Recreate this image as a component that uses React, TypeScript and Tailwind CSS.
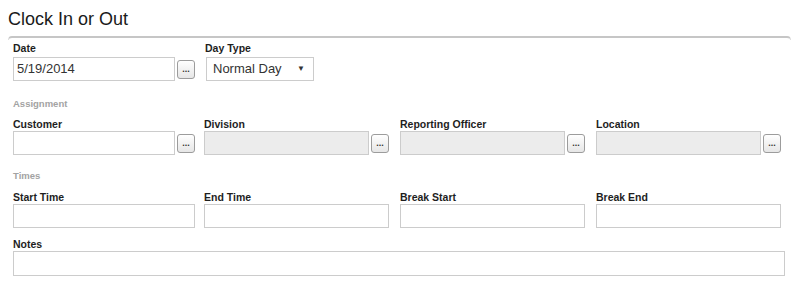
const font = { fontFamily: '"Liberation Sans", Arial, sans-serif' }

function Label({ text, className = "" }: { text: string; className?: string }) {
    return <div className={`text-[10.5px] font-bold leading-[13px] text-[#1e1e1e] ${className}`}>{text}</div>
}

function Section({ text, className = "" }: { text: string; className?: string }) {
    return <div className={`text-[9.5px] font-bold leading-[13px] text-[#a3a3a3] ${className}`}>{text}</div>
}

function Dots() {
    return (
        <button className="ml-[2px] flex h-[19px] w-[18px] shrink-0 items-end justify-center rounded-[3px] border border-[#9c9c9c] bg-gradient-to-b from-white to-[#e6e6e6] pb-[4px] text-[9px] font-bold leading-[9px] text-[#333]">
            ...
        </button>
    )
}

function LookupField({ label, value = "", disabled = false }: { label: string; value?: string; disabled?: boolean }) {
    return (
        <div>
            <Label text={label} />
            <div className="flex items-center">
                <div
                    className={`flex h-[24px] flex-1 items-center border border-[#cccccc] px-[3px] text-[13px] text-[#333] ${disabled ? "bg-[#ececec]" : "bg-white"}`}
                >
                    {value}
                </div>
                <Dots />
            </div>
        </div>
    )
}

function TimeField({ label }: { label: string }) {
    return (
        <div>
            <Label text={label} />
            <div className="h-[24px] w-full border border-[#cccccc] bg-white" />
        </div>
    )
}

export default function App() {
    return (
        <div className="h-[284px] w-[800px] bg-white px-[8px] pt-[8px]" style={font}>
            <div className="text-[18px] leading-[22px] text-[#1a1a1a]">Clock In or Out</div>
            <div className="mt-[6px] h-[4px] w-[783px] rounded-t-[5px] border-x border-t-2 border-[#c6c6c6] border-x-[#dddddd]" />

            <div className="pl-[5px]">
                <div className="mt-[2px] grid grid-cols-[191px_196px_196px_196px]">
                    <div className="w-[182px]">
                        <Label text="Date" className="mb-[2px]" />
                        <div className="flex items-center">
                            <div className="flex h-[24px] flex-1 items-center border border-[#cccccc] bg-white px-[3px] text-[13px] text-[#333]">
                                5/19/2014
                            </div>
                            <Dots />
                        </div>
                    </div>
                    <div>
                        <Label text="Day Type" className="mb-[2px] pl-[1px]" />
                        <div className="ml-[2px] flex h-[24px] w-[108px] items-center justify-between border border-[#cccccc] bg-white pl-[6px] pr-[8px] text-[13px] text-[#333]">
                            <span>Normal Day</span>
                            <span className="text-[8px]">▼</span>
                        </div>
                    </div>
                </div>

                <Section text="Assignment" className="mt-[16px]" />
                <div className="mt-[8px] grid grid-cols-[191px_196px_196px_196px]">
                    <div className="w-[182px]"><LookupField label="Customer" /></div>
                    <div className="w-[185px]"><LookupField label="Division" disabled /></div>
                    <div className="w-[185px]"><LookupField label="Reporting Officer" disabled /></div>
                    <div className="w-[185px]"><LookupField label="Location" disabled /></div>
                </div>

                <Section text="Times" className="mt-[14px]" />
                <div className="mt-[9px] grid grid-cols-[191px_196px_196px_196px]">
                    <div className="w-[182px]"><TimeField label="Start Time" /></div>
                    <div className="w-[185px]"><TimeField label="End Time" /></div>
                    <div className="w-[185px]"><TimeField label="Break Start" /></div>
                    <div className="w-[185px]"><TimeField label="Break End" /></div>
                </div>

                <div className="mt-[10px]">
                    <Label text="Notes" />
                    <div className="h-[25px] w-[772px] border border-[#cccccc] bg-white" />
                </div>
            </div>
        </div>
    )
}
